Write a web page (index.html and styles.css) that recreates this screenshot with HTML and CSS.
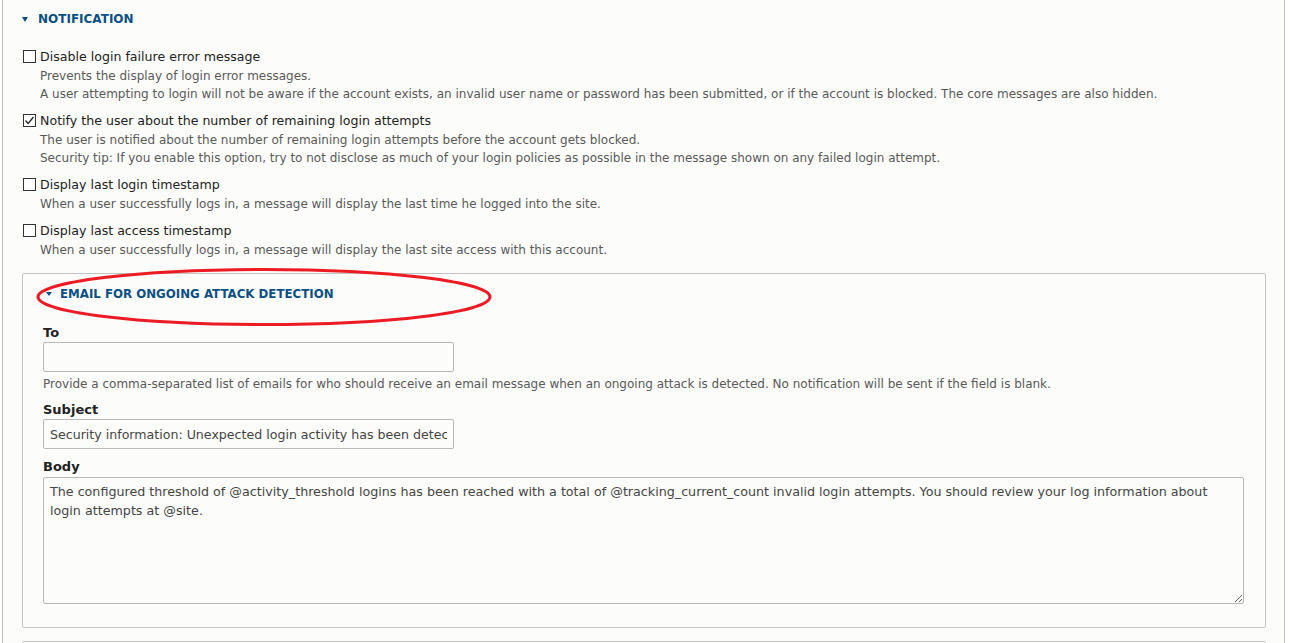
FILE: index.html
```html
<!DOCTYPE html>
<html lang="en">
  <head>
    <meta charset="UTF-8" />
    <title>Notification settings</title>
    <link rel="stylesheet" href="styles.css">
  </head>
  <body>
    <div class="outer">
      <div class="summary">
        <span class="arrow"></span>
        <span class="summary-text">Notification</span>
      </div>

      <div class="items">
        <div class="item">
          <label class="check">
            <span class="box"></span>
            <span>Disable login failure error message</span>
          </label>
          <div class="desc">
            Prevents the display of login error messages.<br />
            A user attempting to login will not be aware if the account exists, an invalid user name or password has been submitted, or if the account is blocked. The core messages are also hidden.
          </div>
        </div>
        <div class="item">
          <label class="check">
            <span class="box">
              <svg width="11" height="11" viewBox="0 0 11 11"><path d="M1.5 5.5 L4.2 8.4 L9.5 2" fill="none" stroke="#222" stroke-width="1.3" /></svg>
            </span>
            <span>Notify the user about the number of remaining login attempts</span>
          </label>
          <div class="desc">
            The user is notified about the number of remaining login attempts before the account gets blocked.<br />
            Security tip: If you enable this option, try to not disclose as much of your login policies as possible in the message shown on any failed login attempt.
          </div>
        </div>
        <div class="item">
          <label class="check">
            <span class="box"></span>
            <span>Display last login timestamp</span>
          </label>
          <div class="desc">When a user successfully logs in, a message will display the last time he logged into the site.</div>
        </div>
        <div class="item">
          <label class="check">
            <span class="box"></span>
            <span>Display last access timestamp</span>
          </label>
          <div class="desc">When a user successfully logs in, a message will display the last site access with this account.</div>
        </div>
      </div>

      <div class="fieldset">
        <div class="legend">
          <span class="arrow small"></span>
          <span>Email for ongoing attack detection</span>
        </div>
        <svg class="circle" width="470" height="66" viewBox="0 0 470 66">
          <ellipse cx="229" cy="31" rx="226" ry="27.5" fill="none" stroke="#ed1c24" stroke-width="3" />
        </svg>

        <div class="field">
          <label class="field-label" for="to">To</label>
          <input class="form-text" id="to" type="text" />
          <div class="desc">Provide a comma-separated list of emails for who should receive an email message when an ongoing attack is detected. No notification will be sent if the field is blank.</div>
        </div>
        <div class="field">
          <label class="field-label" for="subject">Subject</label>
          <input class="form-text" id="subject" type="text" value="Security information: Unexpected login activity has been detected." />
        </div>
        <div class="field body-field">
          <label class="field-label" for="body">Body</label>
          <textarea class="form-textarea" id="body">The configured threshold of @activity_threshold logins has been reached with a total of @tracking_current_count invalid login attempts. You should review your log information about login attempts at @site.</textarea>
        </div>
      </div>

      <div class="fieldset next"></div>
    </div>
  </body>
</html>
```

FILE: styles.css
```css
body {
  margin: 0;
  background: #fff;
  font-family: "DejaVu Sans", Verdana, sans-serif;
  color: #333;
}

.outer {
  margin-left: 2px;
  width: 1244px;
  height: 643px;
  overflow: hidden;
  border-left: 1px solid #bfbfbf;
  border-right: 1px solid #bfbfbf;
  background: #fcfcfa;
  padding: 0 18px 0 19px;
}

.summary {
  display: flex;
  align-items: center;
  height: 20px;
  padding-top: 9px;
  gap: 10px;
}

.arrow {
  display: inline-block;
  width: 0;
  height: 0;
  border-left: 3px solid transparent;
  border-right: 3px solid transparent;
  border-top: 5px solid #0b4f85;
}

.summary-text {
  font-size: 12px;
  font-weight: bold;
  text-transform: uppercase;
  color: #0b4f85;
}

.items {
  display: flex;
  flex-direction: column;
  gap: 7px;
  margin-top: 17px;
}

.check {
  display: flex;
  align-items: center;
  height: 20px;
  font-size: 12.6px;
  color: #222;
}

.box {
  display: flex;
  align-items: center;
  justify-content: center;
  width: 11px;
  height: 11px;
  margin: 0 4px 0 1px;
  border: 1px solid #333;
  background: #fff;
}

.desc {
  font-size: 12px;
  line-height: 18px;
  color: #595959;
  padding-left: 18px;
  margin-top: 1px;
}

.fieldset {
  position: relative;
  border: 1px solid #c4c4c4;
  border-radius: 2px;
  margin-top: 14px;
  padding: 9px 21px 23px 20px;
}

.legend {
  display: flex;
  align-items: center;
  gap: 8px;
  height: 22px;
  margin-left: 3px;
  font-size: 11.8px;
  font-weight: bold;
  text-transform: uppercase;
  color: #0b4f85;
}

.arrow.small {
  border-top-width: 4px;
}

.circle {
  position: absolute;
  left: 12px;
  top: -8px;
}

.field {
  margin-top: 19px;
}

.field + .field {
  margin-top: 8px;
}

.field + .body-field {
  margin-top: 9px;
}

.field .desc {
  padding-left: 0;
  margin-top: 3px;
}

.field-label {
  display: block;
  font-size: 13px;
  font-weight: bold;
  line-height: 18px;
  color: #222;
}

.form-text {
  display: block;
  margin: 0;
  width: 411px;
  height: 30px;
  box-sizing: border-box;
  border: 1px solid #b8b8b8;
  border-radius: 2px;
  background: #fcfcfa;
  padding: 0 6px;
  font-family: "DejaVu Sans", Verdana, sans-serif;
  font-size: 12.6px;
  color: #444;
}

.form-textarea {
  display: block;
  margin: 1px 0 0;
  width: 1201px;
  height: 127px;
  box-sizing: border-box;
  border: 1px solid #b8b8b8;
  border-radius: 2px;
  background: #fcfcfa;
  padding: 4px 12px 4px 6px;
  font-family: "DejaVu Sans", Verdana, sans-serif;
  font-size: 12.7px;
  line-height: 19px;
  color: #444;
}

.fieldset.next {
  margin-top: 13px;
  height: 40px;
  padding: 0;
}
```
